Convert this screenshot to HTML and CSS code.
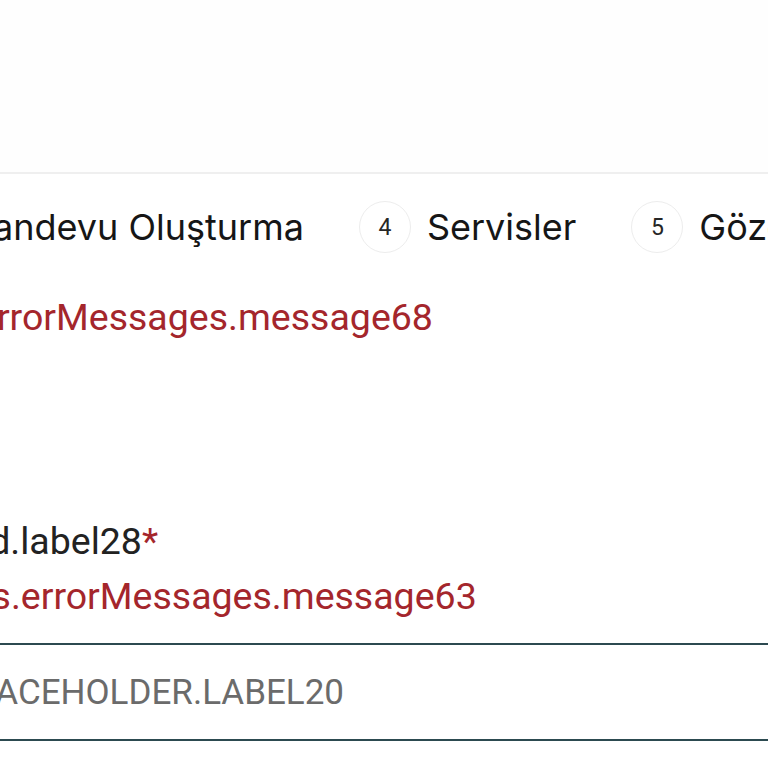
FILE: index.html
```html
<!DOCTYPE html>
<html lang="tr">
<head>
<meta charset="utf-8">
<title>Randevu</title>
<link rel="stylesheet" href="styles.css">
</head>
<body>
<div class="viewport">
  <header class="topbar"></header>
  <nav class="stepper">
    <div class="step step-first">
      <span class="step-num">3</span>
      <span class="step-label">Randevu Oluşturma</span>
    </div>
    <div class="step">
      <span class="step-num">4</span>
      <span class="step-label">Servisler</span>
    </div>
    <div class="step">
      <span class="step-num">5</span>
      <span class="step-label">Gözden Geçirme</span>
    </div>
  </nav>
  <p class="error error-top shift-e">errorMessages.message68</p>
  <div class="field">
    <label class="field-label shift-d">field.label28<span class="req">*</span></label>
    <p class="error shift-s">validations.errorMessages.message63</p>
    <div class="input-box">
      <input class="input shift-pl" type="text" placeholder="PLACEHOLDER.LABEL20">
    </div>
  </div>
</div>
</body>
</html>
```

FILE: styles.css
```css
html, body {
  margin: 0;
  padding: 0;
  background: #ffffff;
}
.viewport {
  width: 768px;
  height: 768px;
  overflow: hidden;
  font-family: "Inter", "Roboto", sans-serif;
  color: #1b1b1b;
}
.topbar {
  height: 172px;
  background: #fefefe;
  border-bottom: 2px solid #efefef;
}
.stepper {
  display: flex;
  align-items: center;
  gap: 55px;
  margin-top: 27px;
  height: 52px;
  white-space: nowrap;
}
.step {
  display: flex;
  align-items: center;
  gap: 16px;
  flex: none;
}
.step-first {
  margin-left: -98px;
}
.step-num {
  width: 50px;
  height: 50px;
  border: 1px solid #ededed;
  border-radius: 50%;
  display: flex;
  align-items: center;
  justify-content: center;
  font-family: "Roboto", sans-serif;
  font-size: 23px;
  color: #262626;
}
.step-label {
  font-size: 36px;
  color: #161616;
}
.error {
  margin: 0;
  font-family: "Roboto", sans-serif;
  font-size: 37.5px;
  line-height: 44px;
  color: #a4262c;
  white-space: nowrap;
}
.error-top {
  margin-top: 42px;
}
.field {
  margin-top: 180px;
}
.field-label {
  display: block;
  font-family: "Roboto", sans-serif;
  font-size: 37.5px;
  line-height: 44px;
  color: #222;
  white-space: nowrap;
  margin-bottom: 11px;
}
.req {
  color: #a4262c;
}
.shift-e { margin-left: -23px; }
.shift-d { margin-left: -62px; }
.shift-s { margin-left: -170px; }
.input-box {
  margin-top: 25px;
  margin-left: -20px;
  margin-right: -20px;
  border-top: 2px solid #2c4a50;
  border-bottom: 2px solid #2c4a50;
  height: 94px;
  display: flex;
  align-items: center;
}
.input {
  border: 0;
  outline: none;
  background: transparent;
  width: 100%;
  font-family: "Roboto", sans-serif;
  font-size: 35px;
  padding: 0;
  color: #222;
}
.input::placeholder {
  color: #6b6b6b;
}
.shift-pl {
  margin-left: -26px;
}
```
